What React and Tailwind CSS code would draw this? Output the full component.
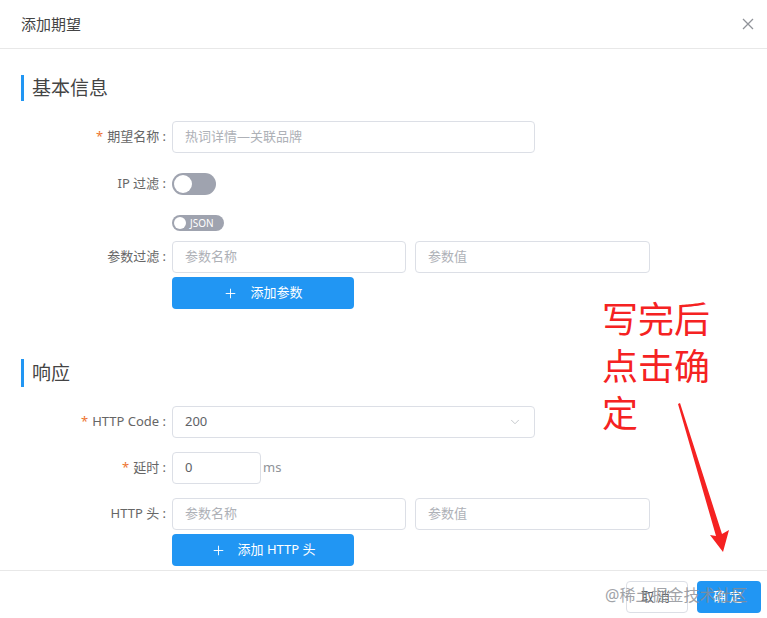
import { ChevronDown, Plus } from 'lucide-react'

const font = { fontFamily: '"Noto Sans", "Noto Sans CJK SC", sans-serif' }

function Label({ children, required }) {
  return (
    <div className="w-[172px] shrink-0 pr-[6px] text-right text-[13px] text-[#666]">
      {required && <span className="mr-[4px] text-[#ee7430]">*</span>}
      {children}
    </div>
  )
}

function Input({ placeholder, value, className = '' }) {
  return (
    <div
      className={`flex h-[32px] items-center rounded-[4px] border border-[#dcdfe6] bg-white px-[12px] text-[13px] ${className}`}
    >
      {value ? (
        <span className="text-[#606266]">{value}</span>
      ) : (
        <span className="text-[#aeb1b7]">{placeholder}</span>
      )}
    </div>
  )
}

function SectionTitle({ children, className = '' }) {
  return (
    <div className={`flex items-center pl-[21px] ${className}`}>
      <div className="h-full w-[3px] bg-[#2196f3]" />
      <div className="ml-[8px] text-[19px] text-[#444]">{children}</div>
    </div>
  )
}

function AddButton({ children }) {
  return (
    <button className="flex h-[32px] w-[182px] items-center justify-center rounded-[4px] bg-[#2196f3] text-[13px] text-white">
      <Plus size={15} strokeWidth={1.5} className="mr-[12px]" />
      {children}
    </button>
  )
}

export default function App() {
  return (
    <div className="relative h-[618px] w-[767px] overflow-hidden bg-white" style={font}>
      {/* header */}
      <div className="flex h-[49px] items-center justify-between border-b border-[#e8e8e8] pl-[21px] pr-[13px]">
        <div className="text-[15px] text-[#444]">添加期望</div>
        <svg width="12" height="12" viewBox="0 0 12 12" className="text-[#909399]">
          <path d="M1 1L11 11M11 1L1 11" stroke="currentColor" strokeWidth="1.3" />
        </svg>
      </div>

      {/* body */}
      <div className="flex h-[521px] flex-col overflow-hidden">
        <SectionTitle className="mt-[26px] h-[26px]">基本信息</SectionTitle>

        <div className="mt-[20px] flex h-[32px] items-center">
          <Label required>期望名称 :</Label>
          <Input className="w-[363px]" placeholder="热词详情—关联品牌" />
        </div>

        <div className="mt-[20px] flex h-[22px] items-center">
          <Label>IP 过滤 :</Label>
          <div className="flex h-[22px] w-[44px] items-center rounded-full bg-[#9fa3af] px-[2px]">
            <div className="h-[18px] w-[18px] rounded-full bg-white" />
          </div>
        </div>

        <div className="mt-[20px] flex h-[16px] items-center">
          <div className="w-[172px] shrink-0" />
          <div className="flex h-[16px] w-[52px] items-center rounded-full bg-[#9fa3af] pl-[2px]">
            <div className="h-[12px] w-[12px] rounded-full bg-white" />
            <span className="ml-[4px] text-[10px] leading-none text-white">JSON</span>
          </div>
        </div>

        <div className="mt-[10px] flex h-[32px] items-center">
          <Label>参数过滤 :</Label>
          <Input className="w-[234px]" placeholder="参数名称" />
          <Input className="ml-[9px] w-[235px]" placeholder="参数值" />
        </div>

        <div className="mt-[4px] flex">
          <div className="w-[172px] shrink-0" />
          <AddButton>添加参数</AddButton>
        </div>

        <SectionTitle className="mt-[50px] h-[28px]">响应</SectionTitle>

        <div className="mt-[19px] flex h-[32px] items-center">
          <Label required>HTTP Code :</Label>
          <div className="flex h-[32px] w-[363px] items-center justify-between rounded-[4px] border border-[#dcdfe6] px-[12px] text-[13px] text-[#606266]">
            <span>200</span>
            <ChevronDown size={14} strokeWidth={1.3} className="text-[#b4b7bd]" />
          </div>
        </div>

        <div className="mt-[14px] flex h-[32px] items-center">
          <Label required>延时 :</Label>
          <Input className="w-[89px]" value="0" />
          <span className="ml-[2px] text-[13px] text-[#909399]">ms</span>
        </div>

        <div className="mt-[14px] flex h-[32px] items-center">
          <Label>HTTP 头 :</Label>
          <Input className="w-[234px]" placeholder="参数名称" />
          <Input className="ml-[9px] w-[235px]" placeholder="参数值" />
        </div>

        <div className="mt-[4px] flex">
          <div className="w-[172px] shrink-0" />
          <AddButton>添加 HTTP 头</AddButton>
        </div>
      </div>

      {/* footer */}
      <div className="flex h-[48px] items-start justify-end gap-[9px] border-t border-[#e8e8e8] pr-[6px] pt-[10px]">
        <button className="h-[32px] w-[62px] rounded-[4px] border border-[#dcdfe6] bg-white text-[13px] tracking-[3px] text-[#606266]">
          取消
        </button>
        <button className="h-[32px] w-[64px] rounded-[4px] bg-[#2196f3] text-[13px] tracking-[3px] text-white">
          确定
        </button>
      </div>

      {/* annotation overlay */}
      <div className="absolute left-[602px] top-[296px] text-[36px] leading-[47px] text-[#f52222]">
        写完后
        <br />
        点击确
        <br />
        定
      </div>
      <svg className="absolute left-[670px] top-[400px]" width="70" height="160" viewBox="0 0 70 160">
        <polygon points="8,4 46,136 40,135 53,152 59,130 52,134 10,3" fill="#f52222" />
      </svg>
      <div className="pointer-events-none absolute left-[605px] top-[583px] text-[16px] text-[#8a8d93] opacity-80">
        @稀土掘金技术社区
      </div>
    </div>
  )
}
